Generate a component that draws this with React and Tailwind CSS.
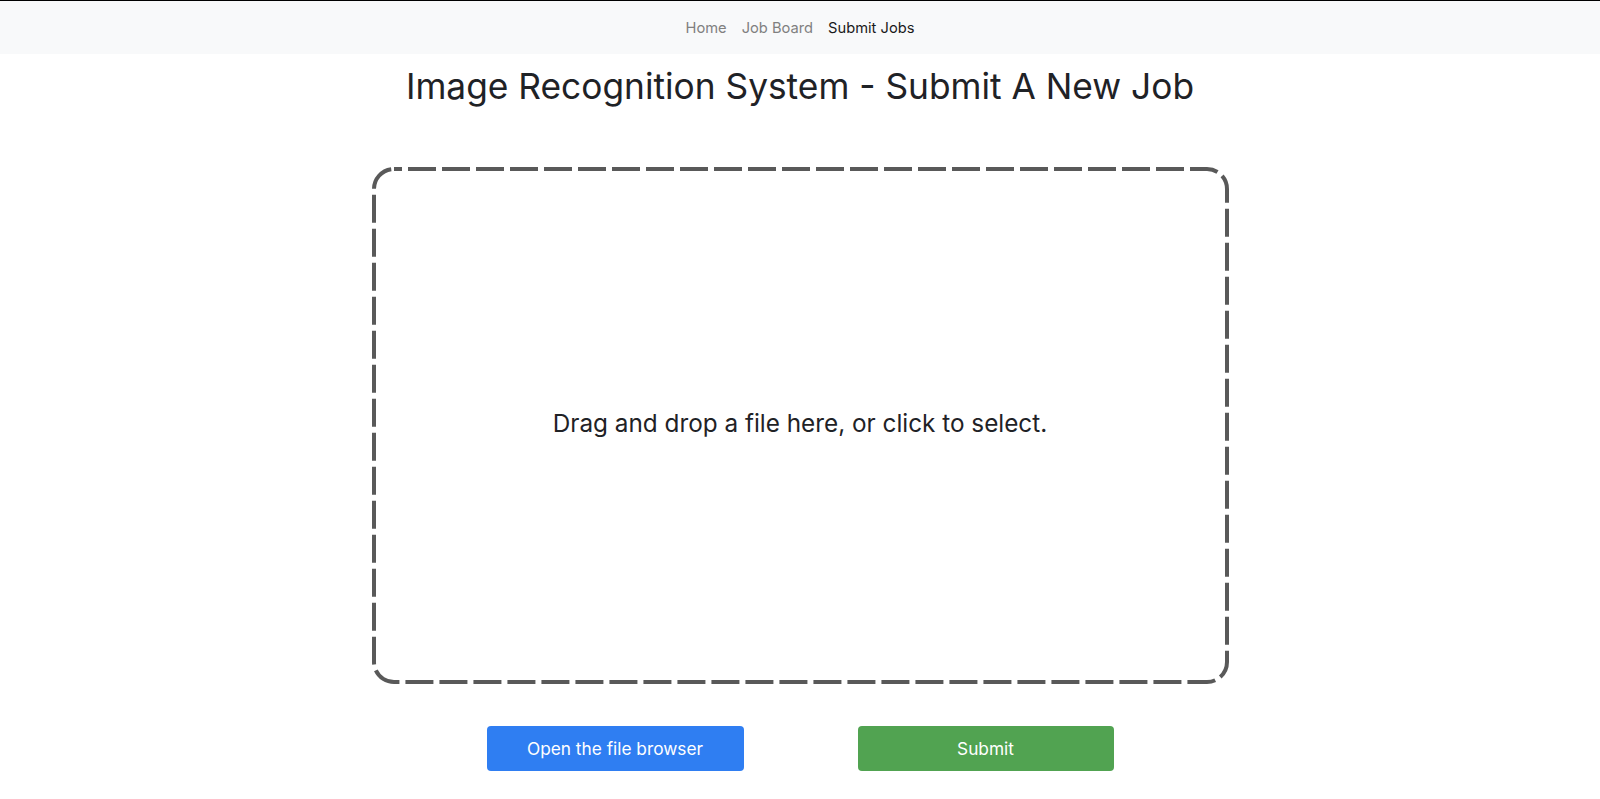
export default function App() {
  const font = { fontFamily: 'Inter, "Noto Sans", "Liberation Sans", sans-serif' };
  return (
    <div className="min-h-[799px] bg-white text-[#212529]" style={font}>
      <div className="border-t border-black bg-[#f8f9fa] h-[54px] flex items-center justify-center pt-[2px]">
        <nav className="flex items-center gap-[15px] text-[14.7px]">
          <a className="text-[#808080]">Home</a>
          <a className="text-[#808080]">Job Board</a>
          <a className="text-[#1a1a1a]">Submit Jobs</a>
        </nav>
      </div>
      <h1 className="text-center text-[35.3px] leading-[1.2] mt-[12px] font-normal text-[#1f2226]">
        Image Recognition System - Submit A New Job
      </h1>
      <div className="flex justify-center mt-[59px]">
        <div className="relative w-[857px] h-[517px] flex items-center justify-center">
          <svg className="absolute inset-0" width="857" height="517" viewBox="0 0 857 517">
            <rect x="2" y="2" width="853" height="513" rx="20" ry="20" fill="none" stroke="#595959" strokeWidth="4" strokeDasharray="28 6" strokeDashoffset="-14" />
          </svg>
          <p className="text-[24.3px] text-[#1f2226] -mt-[6px]">Drag and drop a file here, or click to select.</p>
        </div>
      </div>
      <div className="flex justify-center gap-[114px] mt-[42px]">
        <button className="w-[257px] h-[45px] rounded-[4px] bg-[#2f7ef2] text-white text-[17.3px]">Open the file browser</button>
        <button className="w-[256px] h-[45px] rounded-[4px] bg-[#51a351] text-white text-[17.3px]">Submit</button>
      </div>
    </div>
  );
}
